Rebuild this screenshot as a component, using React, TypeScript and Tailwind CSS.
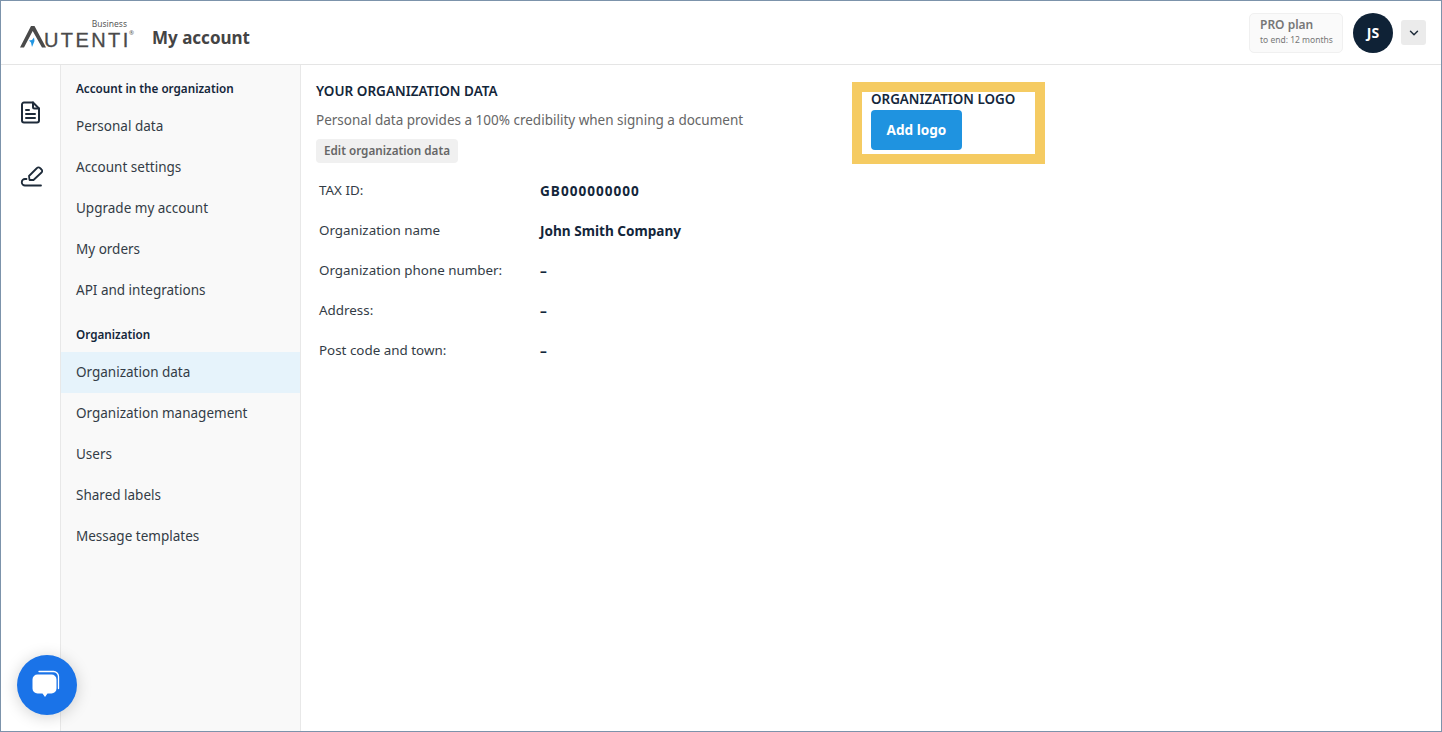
import React from "react";
import { ChevronDown } from "lucide-react";

const accountLinks = ["Personal data", "Account settings", "Upgrade my account", "My orders", "API and integrations"];
const orgLinks = ["Organization data", "Organization management", "Users", "Shared labels", "Message templates"];

const rows = [
  { label: "TAX ID:", value: "GB000000000" },
  { label: "Organization name", value: "John Smith Company" },
  { label: "Organization phone number:", value: "–" },
  { label: "Address:", value: "–" },
  { label: "Post code and town:", value: "–" },
];

function DocIcon() {
  return (
    <svg width="20" height="23" viewBox="0 0 20 23" fill="none" stroke="#1e2b3a" strokeWidth="2" strokeLinejoin="round" strokeLinecap="round">
      <path d="M3 1.5h9l6 6v12a2 2 0 0 1-2 2H3a2 2 0 0 1-2-2v-16a2 2 0 0 1 2-2z" />
      <path d="M12 1.5v4.5a1.5 1.5 0 0 0 1.5 1.5h4.5" />
      <path d="M5 9h3M5 13h9M5 17h9" />
    </svg>
  );
}

function SignIcon() {
  return (
    <svg width="24" height="22" viewBox="0 0 24 22" fill="none" stroke="#1e2b3a" strokeWidth="1.8" strokeLinejoin="round" strokeLinecap="round">
      <path d="M10.5 14l-.5-4 8-8a2 2 0 0 1 3 0l1.5 1.5a2 2 0 0 1 0 3l-8 7.5z" />
      <path d="M22 19.5H6a3.2 3.2 0 0 1 0-6.5h1.5" />
    </svg>
  );
}

function ChatIcon() {
  return (
    <svg width="34" height="34" viewBox="0 0 34 34" fill="none">
      <path d="M9 3.5h14.5a5 5 0 0 1 5 5v12" stroke="#fff" strokeWidth="1.3" strokeLinecap="round" />
      <path
        d="M7.5 6.5h14a5 5 0 0 1 5 5v9a5 5 0 0 1-5 5h-4l-2.5 3.5-2.5-3.5h-5a5 5 0 0 1-5-5v-9a5 5 0 0 1 5-5z"
        fill="#fff"
      />
    </svg>
  );
}

function Logo() {
  return (
    <div className="relative flex items-end h-[30px] w-[113px]">
      <span className="absolute right-[6px] top-[1px] text-[8.5px] leading-[10px] text-[#5a5a5a]">Business</span>
      <svg width="26" height="22" viewBox="0 0 26 22" className="shrink-0 -mr-[2px]">
        <path d="M0 21.5L11 0h3.5L26 21.5h-4L12.7 5 4 21.5z" fill="#4a4a4a" />
        <path d="M9 14.5L12 14l2-2.5.5 3.5-2.5 6-1-4.5z" fill="#2196e3" />
      </svg>
      <span className="text-[20px] leading-[15px] tracking-[2.4px] text-[#4a4a4a] font-['Liberation_Sans',sans-serif] [-webkit-text-stroke:0.3px_#4a4a4a]">
        UTENTI
      </span>
      <span className="absolute right-[-1px] top-[12px] text-[6px] leading-[6px] text-[#5a5a5a]">®</span>
    </div>
  );
}

export default function App() {
  return (
    <div className="w-[1442px] h-[732px] flex flex-col overflow-hidden bg-white border border-[#7c93ab] font-['Noto_Sans',sans-serif] text-[#13263a]">
      {/* Header */}
      <header className="h-[64px] shrink-0 flex items-center justify-between border-b border-[#e5e5e5] pl-[19px] pr-[15px]">
        <div className="flex items-center">
          <Logo />
          <h1 className="ml-[19px] mt-[11px] text-[17px] leading-[24px] font-bold text-[#444444]">My account</h1>
        </div>
        <div className="flex items-center">
          <div className="w-[94px] h-[40px] rounded-[5px] bg-[#fafafa] border border-[#f0f0f0] pl-[10px] pt-[3px]">
            <div className="text-[12px] leading-[16px] font-semibold text-[#777777]">PRO plan</div>
            <div className="text-[8.5px] leading-[13px] text-[#777777]">to end: 12 months</div>
          </div>
          <div className="ml-[10px] w-[40px] h-[40px] rounded-full bg-[#0f2236] flex items-center justify-center text-white text-[14px] font-bold">
            JS
          </div>
          <div className="ml-[8px] w-[25px] h-[25px] rounded-[3px] bg-[#ebebeb] flex items-center justify-center">
            <ChevronDown size={14} strokeWidth={2.5} color="#1e2b3a" />
          </div>
        </div>
      </header>

      <div className="flex flex-1 min-h-0">
        {/* Icon rail */}
        <div className="relative w-[60px] shrink-0 flex flex-col items-center pt-[36px] gap-[42px] border-r border-[#e8e8e8]">
          <DocIcon />
          <SignIcon />
          <button className="absolute left-[16px] bottom-[16px] z-10 w-[60px] h-[60px] rounded-full bg-[#1a73e8] flex items-center justify-center shadow-[0_2px_16px_rgba(0,0,0,0.18)]">
            <ChatIcon />
          </button>
        </div>

        {/* Sidebar */}
        <aside className="w-[240px] shrink-0 bg-[#f9f9f9] border-r border-[#e8e8e8] pt-[14px] text-[13.5px]">
          <div className="pl-[15px] text-[11.7px] leading-[18px] font-semibold">Account in the organization</div>
          <div className="mt-[9px]">
            {accountLinks.map((l) => (
              <div key={l} className="h-[41px] pl-[15px] flex items-center text-[#333c46]">{l}</div>
            ))}
          </div>
          <div className="mt-[14px] pl-[15px] text-[11.7px] leading-[18px] font-semibold">Organization</div>
          <div className="mt-[9px]">
            {orgLinks.map((l, i) => (
              <div key={l} className={`h-[41px] pl-[15px] flex items-center text-[#333c46] ${i === 0 ? "bg-[#e6f3fb]" : ""}`}>{l}</div>
            ))}
          </div>
        </aside>

        {/* Main */}
        <main className="flex-1 flex items-start pl-[15px] pt-[16px]">
          <section className="w-[536px] shrink-0">
            <h2 className="text-[13.5px] leading-[20px] font-semibold">YOUR ORGANIZATION DATA</h2>
            <p className="mt-[9px] text-[13.5px] leading-[20px] text-[#666666]">Personal data provides a 100% credibility when signing a document</p>
            <button className="mt-[9px] block h-[24px] px-[8px] rounded-[4px] bg-[#f0f0f0] text-[11.7px] font-semibold text-[#666666]">
              Edit organization data
            </button>
            <div className="mt-[8px] pl-[3px]">
              {rows.map((r, i) => (
                <div key={r.label} className="h-[40px] flex items-center text-[13.4px]">
                  <div className="w-[221px] text-[#333c46] -mt-[2px]">{r.label}</div>
                  <div className={`font-bold text-[13.6px] ${i === 0 ? "tracking-[1px]" : ""}`}>{r.value}</div>
                </div>
              ))}
            </div>
          </section>

          <section className="mt-[1px] w-[193px] h-[82px] border-[10px] border-[#f5cb62] pl-[9px]">
            <h2 className="text-[13.4px] leading-[14px] font-semibold whitespace-nowrap">ORGANIZATION LOGO</h2>
            <button className="mt-[4px] block w-[91px] h-[40px] rounded-[4px] bg-[#1f93e0] text-white text-[13.6px] font-bold">
              Add logo
            </button>
          </section>
        </main>
      </div>
    </div>
  );
}
